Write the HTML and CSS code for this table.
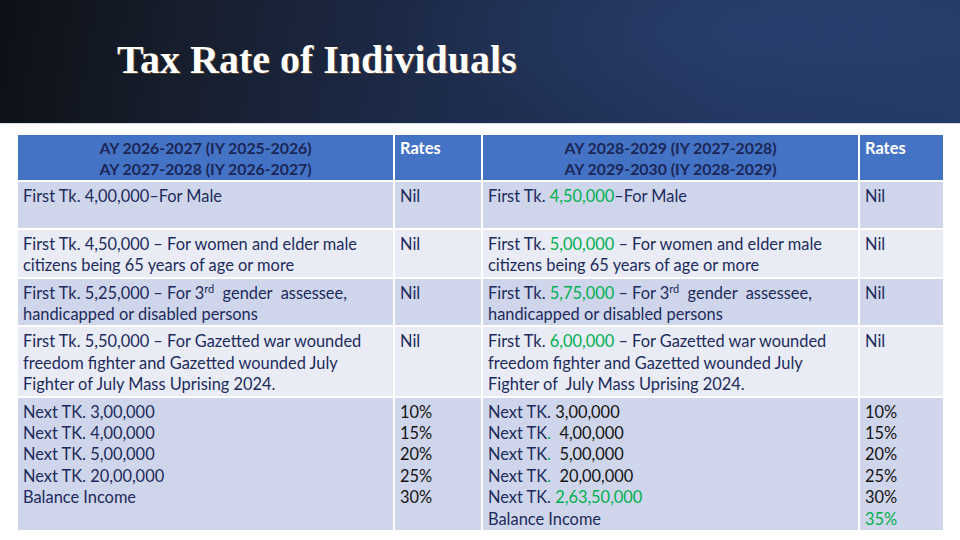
FILE: index.html
```html
<!DOCTYPE html>
<html lang="en">
<head>
<meta charset="utf-8">
<title>Tax Rate of Individuals</title>
<link rel="stylesheet" href="styles.css">
</head>
<body>
<header class="banner">
  <h1 class="title">Tax Rate of Individuals</h1>
</header>
<main class="content">
  <table class="rates">
    <colgroup>
      <col class="c-desc"><col class="c-rate"><col class="c-desc2"><col class="c-rate2">
    </colgroup>
    <thead>
      <tr>
        <th class="yr">AY 2026-2027 (IY 2025-2026)<br>AY 2027-2028 (IY 2026-2027)</th>
        <th class="rh">Rates</th>
        <th class="yr">AY 2028-2029 (IY 2027-2028)<br>AY 2029-2030 (IY 2028-2029)</th>
        <th class="rh">Rates</th>
      </tr>
    </thead>
    <tbody>
      <tr class="odd r2">
        <td>First Tk. 4,00,000–For Male</td>
        <td>Nil</td>
        <td>First Tk. <span class="g">4,50,000</span>–For Male</td>
        <td>Nil</td>
      </tr>
      <tr class="even r2">
        <td>First Tk. 4,50,000 – For women and elder male citizens being 65 years of age or more</td>
        <td>Nil</td>
        <td>First Tk. <span class="g">5,00,000</span> – For women and elder male citizens being 65 years of age or more</td>
        <td>Nil</td>
      </tr>
      <tr class="odd r2">
        <td>First Tk. 5,25,000 – For 3<sup>rd</sup>&nbsp; gender&nbsp; assessee, handicapped or disabled persons</td>
        <td>Nil</td>
        <td>First Tk. <span class="g">5,75,000</span> – For 3<sup>rd</sup>&nbsp; gender&nbsp; assessee, handicapped or disabled persons</td>
        <td>Nil</td>
      </tr>
      <tr class="even">
        <td>First Tk. 5,50,000 – For Gazetted war wounded freedom fighter and Gazetted wounded July Fighter of July Mass Uprising 2024.</td>
        <td>Nil</td>
        <td>First Tk. <span class="g">6,00,000</span> – For Gazetted war wounded freedom fighter and Gazetted wounded July Fighter of&nbsp; July Mass Uprising 2024.</td>
        <td>Nil</td>
      </tr>
      <tr class="odd">
        <td>Next TK. 3,00,000<br>Next TK. 4,00,000<br>Next TK. 5,00,000<br>Next TK. 20,00,000<br>Balance Income</td>
        <td class="num">10%<br>15%<br>20%<br>25%<br>30%</td>
        <td>Next TK. <span class="k">3,00,000</span><br>Next TK<span class="g">.</span>&nbsp; <span class="k">4,00,000</span><br>Next TK<span class="g">.</span>&nbsp; <span class="k">5,00,000</span><br>Next TK<span class="g">.</span>&nbsp; <span class="k">20,00,000</span><br>Next TK. <span class="g">2,63,50,000</span><br>Balance Income</td>
        <td class="num">10%<br>15%<br>20%<br>25%<br>30%<br><span class="g">35%</span></td>
      </tr>
    </tbody>
  </table>
</main>
</body>
</html>
```

FILE: styles.css
```css
html, body {
  margin: 0;
  padding: 0;
  background: #ffffff;
  width: 960px;
  height: 540px;
  overflow: hidden;
}

.banner {
  height: 124px;
  background:
    radial-gradient(ellipse 520px 160px at 760px 30px, rgba(44, 68, 118, 0.55), rgba(44, 68, 118, 0) 70%),
    linear-gradient(100deg, #0d1015 0%, #161d2b 18%, #1d2b4a 45%, #22365f 75%, #253a66 100%);
  border-bottom: 1px solid #d8dce6;
  box-sizing: border-box;
  padding: 37px 0 0 117px;
}

.title {
  margin: 0;
  font-family: "Liberation Serif", "Times New Roman", serif;
  font-weight: bold;
  font-size: 40px;
  line-height: 46px;
  color: #ffffff;
  text-shadow: 1px 1px 0 rgba(150, 100, 40, 0.5);
}

.content {
  padding: 9px 0 0 16px;
}

.rates {
  border-collapse: collapse;
  table-layout: fixed;
  width: 927px;
  font-family: "Lato", "Open Sans", sans-serif;
  font-size: 16.4px;
  line-height: 21.4px;
  color: #1c2b5c;
}

.c-desc { width: 377px; }
.c-rate { width: 88px; }
.c-desc2 { width: 377px; }
.c-rate2 { width: 85px; }

.rates th,
.rates td {
  border: 2px solid #ffffff;
  vertical-align: top;
  text-align: left;
  padding: 3px 5px 1px 5px;
}

.rates th {
  background: #4472c4;
  font-weight: bold;
  padding: 2px 5px 0 5px;
}

.rates th.yr {
  text-align: center;
  color: #1b2757;
  font-size: 15.8px;
}

.rates th.rh {
  color: #ffffff;
}

.odd td { background: #cfd5ea; }
.even td { background: #e9ebf5; }

.r2 td { height: 42px; }

.rates sup {
  font-size: 11px;
  line-height: 0;
  vertical-align: 6px;
}

.g { color: #00b050; }
.k { color: #141414; }
.num { color: #141414; }
```
